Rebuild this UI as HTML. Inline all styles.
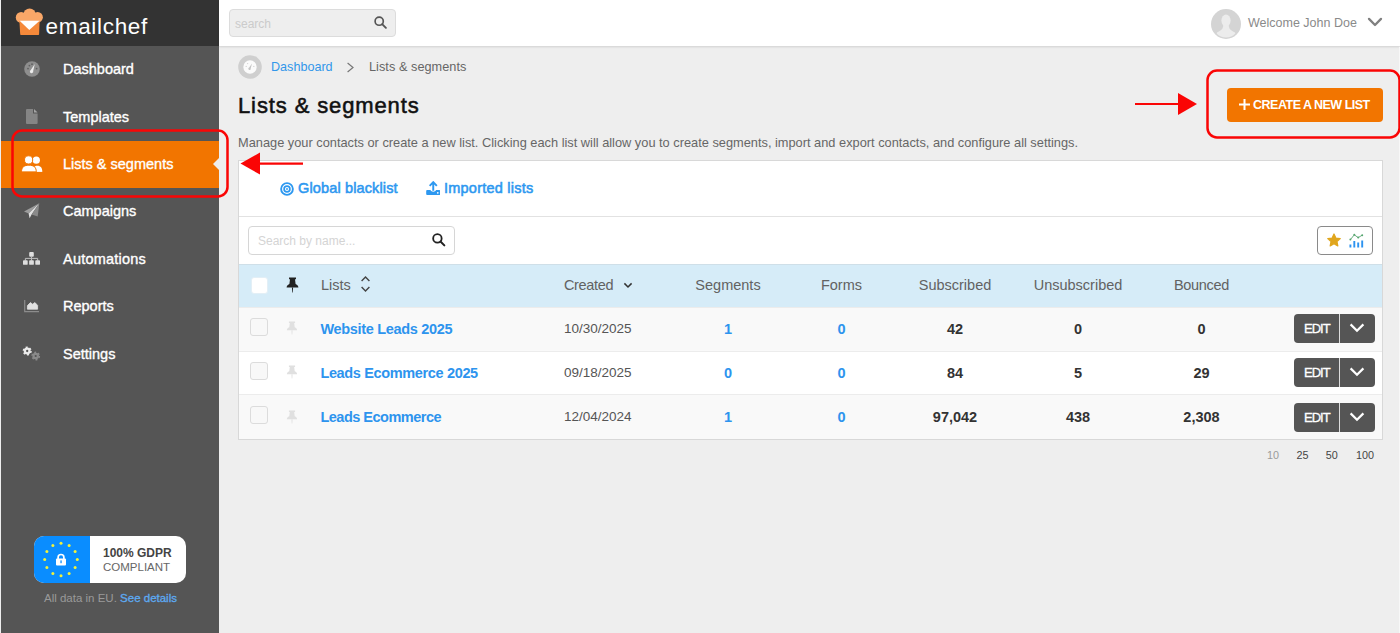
<!DOCTYPE html>
<html lang="en">
<head>
<meta charset="utf-8">
<title>Lists &amp; segments - emailchef</title>
<style>
*{box-sizing:border-box;margin:0;padding:0}
html,body{width:1400px;height:633px;overflow:hidden;background:#eeeeee;font-family:"Liberation Sans",sans-serif;}
body{position:relative}
.abs{position:absolute}
.t{position:absolute;white-space:nowrap;line-height:20px;height:20px}
/* sidebar */
#side{position:absolute;left:1px;top:0;width:218.4px;height:633px;background:#555555}
#logo{position:absolute;left:0;top:0;width:218.4px;height:46px;background:#333333}
#logo .t{left:44.5px;top:11.5px;font-size:22.5px;line-height:30px;height:30px;color:#fff;letter-spacing:.69px}
.nav{position:absolute;left:0;width:218.4px;height:47px}
.nav .t{left:62px;top:13px;font-size:14.5px;color:#fff;-webkit-text-stroke:0.35px #fff}
.nav.on{background:#f27500}
.nav.on:after{content:"";position:absolute;right:0;top:16.5px;border-style:solid;border-width:6.5px 6.5px 6.5px 0;border-color:transparent #eee transparent transparent}
.nav svg{position:absolute}
/* topbar */
#top{position:absolute;left:219.4px;top:0;width:1180.6px;height:46px;background:#fff;box-shadow:0 1px 2px rgba(0,0,0,.12)}
#gsearch{position:absolute;left:9.6px;top:9px;width:167px;height:28px;background:#eeeeee;border:1px solid #dcdcdc;border-radius:4px}
#gsearch .t{left:5px;top:4px;font-size:12px;color:#cbcbcb}
/* content */
a{color:#3297ea;text-decoration:none}
.med a{color:#2d98f0;-webkit-text-stroke:.55px #2d98f0}
#panel{position:absolute;left:238px;top:160px;width:1145px;height:280px;background:#fff;border:1px solid #d8d8d8}
.hr{position:absolute;left:0;width:1143px;height:1px;background:#e2e2e2}
#thead{position:absolute;left:0;top:103px;width:1143px;height:43px;background:#d6ecf8;border-top:1px solid #cfdfe8}
.row{position:absolute;left:0;width:1143px;height:44px;border-top:1px solid #ececec}
.row.odd{background:#f9f9f9}
.row .cb{background:#f8f8f8}
.cb{position:absolute;left:11px;width:18px;height:18px;border:1px solid #dcdcdc;border-radius:3px;background:#fff}
.th{font-size:14.5px;color:#626262;font-weight:normal}
.c{transform:translateX(-50%)}
.name{font-size:14.5px;font-weight:bold;color:#2d94ee;left:81.4px}
.date{font-size:13.5px;color:#555;left:325px}
.numb{font-size:14.5px;font-weight:bold;color:#2d94ee}
.numk{font-size:14.5px;font-weight:bold;color:#333}
.edit{position:absolute;left:1055px;width:81px;height:29px;background:#555;border-radius:4px}
.edit i{position:absolute;left:45px;top:0;width:1px;height:29px;background:#ddd}
.edit .t{left:10px;top:5px;font-size:13px;color:#fff;letter-spacing:-1px;-webkit-text-stroke:.3px #fff}
.edit svg{position:absolute;left:55px;top:9px}
.pg{font-size:10.8px;color:#444;top:445px}
</style>
</head>
<body>
<!-- SIDEBAR -->
<div id="side">
  <div id="logo">
    <svg class="abs" style="left:14px;top:7px" width="30" height="30" viewBox="0 0 30 30">
      <g fill="#f9a768"><circle cx="6.2" cy="10.4" r="5.4"/><circle cx="14.6" cy="7.6" r="6.2"/><circle cx="22.6" cy="10.2" r="5.3"/><rect x="5" y="8" width="19" height="8"/></g>
      <path d="M4.4 14.2 L24.6 14.2 L24.1 27.2 Q24.1 27.9 23.4 27.9 L5.9 27.9 Q5.2 27.9 5.2 27.2 Z" fill="#f5893a"/>
      <path d="M4.6 13.8 L24.6 13.8 L14.3 22.9 Z" fill="#ffffff"/>
    </svg>
    <span class="t">emailchef</span>
  </div>

  <div class="nav" style="top:46px">
    <svg style="left:23px;top:15px" width="16" height="16" viewBox="0 0 16 16"><circle cx="8" cy="8" r="7.8" fill="#8e8e8e"/><path d="M10.8 3 L9.2 10 A1.7 1.7 0 1 1 6.8 9 Z" fill="#ececec"/><circle cx="4" cy="7.6" r=".9" fill="#606060"/><circle cx="5.4" cy="4.6" r=".9" fill="#606060"/><circle cx="8" cy="3.2" r=".9" fill="#606060"/><circle cx="12.6" cy="7.6" r=".9" fill="#606060"/></svg>
    <span class="t">Dashboard</span>
  </div>
  <div class="nav" style="top:93px">
    <svg style="left:25px;top:16px" width="12" height="15" viewBox="0 0 12 15"><path d="M1 0 H7 V4.6 H11.6 V14 a1 1 0 0 1 -1 1 H1 a1 1 0 0 1 -1 -1 V1 a1 1 0 0 1 1 -1 Z" fill="#858585"/><path d="M8 0 L11.6 3.6 H8 Z" fill="#a5a5a5"/></svg>
    <span class="t" style="top:14px">Templates</span>
  </div>
  <div class="nav on" style="top:141px">
    <svg style="left:20px;top:14px" width="22" height="17" viewBox="0 0 22 17"><circle cx="15.3" cy="5.2" r="3.6" fill="#fff"/><path d="M12.8 16.9 C12.8 12.6 13.4 10.8 16.4 10.8 C19.8 10.8 21.3 13 21.3 16.9 Z" fill="#fff"/><circle cx="7.6" cy="4.9" r="4.1" fill="#fff" stroke="#f27500" stroke-width="1"/><path d="M0.5 16.9 C0.5 12.2 3 10.2 7.9 10.2 C12.8 10.2 15.3 12.2 15.3 16.9 Z" fill="#fff" stroke="#f27500" stroke-width="1"/><rect x="0" y="16.9" width="22" height="1" fill="#f27500"/></svg>
    <span class="t">Lists &amp; segments</span>
  </div>
  <div class="nav" style="top:188px">
    <svg style="left:23px;top:15px" width="16" height="16" viewBox="0 0 16 16"><path d="M15.3 .3 L0 8.6 L4.6 10.4 Z" fill="#9c9c9c"/><path d="M15.3 .3 L4.6 10.4 L5.6 15.2 L7.6 11.4 Z" fill="#e0e0e0"/><path d="M15.3 .3 L7.6 11.4 L13.7 13.6 Z" fill="#8a8a8a"/></svg>
    <span class="t">Campaigns</span>
  </div>
  <div class="nav" style="top:236px">
    <svg style="left:22.3px;top:15.9px" width="17" height="13" viewBox="0 0 17 13"><rect x="6.2" y="0" width="4.6" height="4.7" rx=".9" fill="#dedede"/><path d="M8.5 4.4 V8.6 M2.35 8.6 V6.4 H14.65 V8.6" stroke="#bdbdbd" stroke-width="1" fill="none"/><rect x="0" y="8.2" width="4.7" height="4.6" rx=".9" fill="#dedede"/><rect x="6.15" y="8.2" width="4.7" height="4.6" rx=".9" fill="#dedede"/><rect x="12.3" y="8.2" width="4.7" height="4.6" rx=".9" fill="#dedede"/></svg>
    <span class="t" style="letter-spacing:.22px">Automations</span>
  </div>
  <div class="nav" style="top:283px">
    <svg style="left:23.4px;top:16.6px" width="16" height="13" viewBox="0 0 16 13"><path d="M.7 0 V11.6 H15" stroke="#8c8c8c" stroke-width="1.2" fill="none"/><path d="M3.4 9.2 V5.6 L6.4 2.6 L8.6 4.2 L11 2.6 L13.6 5.4 V9.2 Z" fill="#e0e0e0" stroke="#e0e0e0" stroke-width=".8" stroke-linejoin="round"/></svg>
    <span class="t">Reports</span>
  </div>
  <div class="nav" style="top:331px">
    <svg style="left:20px;top:12px" width="20" height="20" viewBox="0 0 20 20"><g fill="none"><circle cx="6.2" cy="8" r="2.3" stroke="#ececec" stroke-width="2.3"/><circle cx="6.2" cy="8" r="3.8" stroke="#ececec" stroke-width="1.5" stroke-dasharray="1.99 1.99"/><circle cx="14.7" cy="13" r="2.2" stroke="#8a8a8a" stroke-width="2.2"/><circle cx="14.7" cy="13" r="3.7" stroke="#8a8a8a" stroke-width="1.4" stroke-dasharray="1.94 1.94"/></g></svg>
    <span class="t">Settings</span>
  </div>

  <!-- GDPR badge -->
  <div class="abs" style="left:33px;top:536px;width:152px;height:46.5px;background:#fff;border-radius:10px;overflow:hidden">
    <div class="abs" style="left:0;top:0;width:56px;height:47px;background:#0a8dff"></div>
    <svg class="abs" style="left:0;top:0" width="56" height="46" viewBox="0 0 56 46">
      <g fill="#f2f23a">
        <circle cx="27" cy="7.2" r="1.5"/><circle cx="35.1" cy="9.4" r="1.5"/><circle cx="41.1" cy="15.4" r="1.5"/><circle cx="43.3" cy="23.5" r="1.5"/><circle cx="41.1" cy="31.6" r="1.5"/><circle cx="35.1" cy="37.6" r="1.5"/><circle cx="27" cy="39.8" r="1.5"/><circle cx="18.9" cy="37.6" r="1.5"/><circle cx="12.9" cy="31.6" r="1.5"/><circle cx="10.7" cy="23.5" r="1.5"/><circle cx="12.9" cy="15.4" r="1.5"/><circle cx="18.9" cy="9.4" r="1.5"/>
      </g>
      <path d="M24.1 23 V21.4 a2.9 2.9 0 0 1 5.8 0 V23" stroke="#fff" stroke-width="1.7" fill="none"/>
      <rect x="22" y="22.4" width="10" height="7" rx="1" fill="#fff"/>
      <rect x="26.4" y="24.4" width="1.3" height="2.8" fill="#0a8dff"/>
    </svg>
    <span class="t" style="left:69px;top:7px;font-size:12px;font-weight:bold;color:#444">100% GDPR</span>
    <span class="t" style="left:69px;top:21px;font-size:11.5px;color:#666">COMPLIANT</span>
  </div>
  <span class="t" style="left:43px;top:588px;font-size:11.5px;color:#9a9a9a">All data in EU. <a style="color:#5daaf2;-webkit-text-stroke:0.3px #5daaf2">See details</a></span>
</div>

<!-- TOPBAR -->
<div id="top">
  <div id="gsearch">
    <span class="t">search</span>
    <svg class="abs" style="left:144px;top:6px" width="13" height="13" viewBox="0 0 14 14"><circle cx="5.6" cy="5.6" r="4.4" stroke="#555" stroke-width="1.8" fill="none"/><path d="M8.8 8.8 L12.8 12.8" stroke="#555" stroke-width="2" stroke-linecap="round"/></svg>
  </div>
  <svg class="abs" style="left:991.6px;top:9px" width="30" height="30" viewBox="0 0 30 30"><defs><clipPath id="av"><circle cx="15" cy="15" r="13.4"/></clipPath></defs><circle cx="15" cy="15" r="15" fill="#d4d4d4"/><g clip-path="url(#av)" fill="#ececec"><ellipse cx="15" cy="11.6" rx="4.6" ry="6"/><path d="M12.2 15 C12.6 20 10.4 21.4 6 23.4 L4 30 L26 30 L24 23.4 C19.6 21.4 17.4 20 17.8 15 Z"/></g></svg>
  <span class="t" style="left:1028.6px;top:13px;font-size:12.5px;color:#8a8a8a">Welcome John Doe</span>
  <svg class="abs" style="left:1147.6px;top:16.5px" width="16" height="11" viewBox="0 0 16 11"><path d="M2 1.9 L8 8 L14 1.9" stroke="#808080" stroke-width="2.3" fill="none" stroke-linecap="round" stroke-linejoin="round"/></svg>
</div>

<!-- BREADCRUMB -->
<svg class="abs" style="left:238px;top:55px" width="24" height="24" viewBox="0 0 24 24"><circle cx="12" cy="12" r="11.8" fill="#cfcfcf"/><circle cx="12" cy="12" r="6.7" fill="#fbfbfb"/><path d="M14 8.6 L12.7 13.4 A1.2 1.2 0 1 1 11.2 12.6 Z" fill="#c4c4c4"/><circle cx="8.2" cy="11.4" r=".7" fill="#d4d4d4"/><circle cx="9.6" cy="8.6" r=".7" fill="#d4d4d4"/><circle cx="15.8" cy="11.4" r=".7" fill="#d4d4d4"/></svg>
<span class="t" style="left:271px;top:57px;font-size:12.6px"><a>Dashboard</a></span>
<svg class="abs" style="left:346px;top:61.5px" width="9" height="11" viewBox="0 0 9 11"><path d="M1.6 1 L7 5.5 L1.6 10" stroke="#777" stroke-width="1.2" fill="none"/></svg>
<span class="t" style="left:369px;top:57px;font-size:12.7px;letter-spacing:.05px;color:#666">Lists &amp; segments</span>

<!-- HEADING -->
<h1 class="t" style="left:238px;top:90.5px;font-size:22px;letter-spacing:.88px;line-height:30px;height:30px;font-weight:normal;-webkit-text-stroke:.55px #111;color:#111">Lists &amp; segments</h1>
<span class="t" id="sub" style="left:238px;top:133px;font-size:12.8px;color:#666">Manage your contacts or create a new list. Clicking each list will allow you to create segments, import and export contacts, and configure all settings.</span>

<!-- CREATE BUTTON -->
<div class="abs" style="left:1227px;top:87.6px;width:156px;height:34.4px;background:#f27500;border-radius:4px">
  <svg class="abs" style="left:12px;top:11.5px" width="11" height="11" viewBox="0 0 11 11"><path d="M5.5 0 V11 M0 5.5 H11" stroke="#fff" stroke-width="2"/></svg>
  <span class="t" style="left:26px;top:7.4px;font-size:12.5px;letter-spacing:-.5px;font-weight:bold;color:#fff">CREATE A NEW LIST</span>
</div>

<!-- PANEL -->
<div id="panel">
  <svg class="abs" style="left:40.7px;top:20.6px" width="14" height="14" viewBox="0 0 15 15"><circle cx="7.5" cy="7.5" r="6.3" stroke="#2d98f0" stroke-width="2" fill="none"/><circle cx="7.5" cy="7.5" r="3.1" stroke="#2d98f0" stroke-width="1.8" fill="none"/><circle cx="7.5" cy="7.5" r="1" fill="#2d98f0"/></svg>
  <span class="t med" style="left:59px;top:17px;font-size:14.5px;letter-spacing:.14px"><a>Global blacklist</a></span>
  <svg class="abs" style="left:186.6px;top:20.3px" width="14.5" height="14.5" viewBox="0 0 15 15"><path d="M7.5 10 V1.6 M3.8 5 L7.5 1.2 L11.2 5" stroke="#2d98f0" stroke-width="2" fill="none"/><path d="M1.2 9.4 H4.6 C5.4 11.6 9.6 11.6 10.4 9.4 H13.8 a1 1 0 0 1 1 1 V13.4 a1 1 0 0 1 -1 1 H1.2 a1 1 0 0 1 -1 -1 V10.4 a1 1 0 0 1 1 -1 Z" fill="#2d98f0"/><circle cx="12.2" cy="12.2" r=".9" fill="#fff"/></svg>
  <span class="t med" style="left:205px;top:17px;font-size:14.5px;letter-spacing:.23px"><a>Imported lists</a></span>
  <div class="hr" style="top:55px"></div>

  <!-- search by name -->
  <div class="abs" style="left:9px;top:65px;width:207px;height:28.6px;border:1px solid #d6d6d6;border-radius:4px;background:#fff">
    <span class="t" style="left:9px;top:4px;font-size:12px;color:#d4d4d4">Search by name...</span>
    <svg class="abs" style="left:183px;top:6px" width="13.5" height="13.5" viewBox="0 0 14 14"><circle cx="5.6" cy="5.6" r="4.4" stroke="#222" stroke-width="1.9" fill="none"/><path d="M8.8 8.8 L12.8 12.8" stroke="#222" stroke-width="2.1" stroke-linecap="round"/></svg>
  </div>
  <!-- star / chart toggle -->
  <div class="abs" style="left:1078px;top:65px;width:56px;height:28.5px;border:1px solid #8a8a8a;border-radius:4px;background:#fff">
    <svg class="abs" style="left:8.6px;top:6.4px" width="14" height="14" viewBox="0 0 15 15"><path d="M7.5 1 L9.5 5.4 L14.2 6 L10.7 9.2 L11.6 13.9 L7.5 11.6 L3.4 13.9 L4.3 9.2 L.8 6 L5.5 5.4 Z" fill="#e0a61e" stroke="#e0a61e" stroke-width="1.3" stroke-linejoin="round"/></svg>
    <svg class="abs" style="left:31px;top:6px" width="15" height="15" viewBox="0 0 15 15"><path d="M1.4 6.6 L5.3 1.8 L9.2 4.6 L13.2 2.2" stroke="#6aae80" stroke-width="1" fill="none"/><g fill="#55a56e"><circle cx="1.4" cy="6.6" r="1"/><circle cx="5.3" cy="1.8" r="1"/><circle cx="9.2" cy="4.6" r="1"/><circle cx="13.2" cy="2.2" r="1"/></g><path d="M1.4 14.4 V11.6 M5.3 14.4 V8 M9.2 14.4 V9.6 M13.2 14.6 V7.6" stroke="#2d93f0" stroke-width="1.9"/></svg>
  </div>

  <!-- table header -->
  <div id="thead">
    <div class="cb" style="top:11.5px;left:12px;width:17px;height:17px;border-color:#e3eff6"></div>
    <svg class="abs" style="left:47.2px;top:11.5px" width="13" height="16" viewBox="0 0 13 16"><path d="M3 .6 H10 V2.2 H9 L9.6 7 C11.4 7.8 12.4 9 12.4 10.6 H.6 C.6 9 1.6 7.8 3.4 7 L4 2.2 H3 Z" fill="#222"/><path d="M5.9 10.6 H7.1 L6.8 15.4 H6.2 Z" fill="#222"/></svg>
    <span class="t th" style="left:82px;top:10px">Lists</span>
    <svg class="abs" style="left:121px;top:10px" width="11" height="18" viewBox="0 0 11 18"><path d="M1.6 6 L5.5 2 L9.4 6 M1.6 12 L5.5 16 L9.4 12" stroke="#444" stroke-width="1.4" fill="none"/></svg>
    <span class="t th" style="left:325px;top:10px;letter-spacing:-.35px">Created</span>
    <svg class="abs" style="left:384px;top:17px" width="10" height="7" viewBox="0 0 10 7"><path d="M1.4 1.4 L5 5 L8.6 1.4" stroke="#333" stroke-width="1.5" fill="none"/></svg>
    <span class="t th c" style="left:489px;top:10px">Segments</span>
    <span class="t th c" style="left:602.5px;top:10px">Forms</span>
    <span class="t th c" style="left:716px;top:10px">Subscribed</span>
    <span class="t th c" style="left:839px;top:10px">Unsubscribed</span>
    <span class="t th c" style="left:962.5px;top:10px;letter-spacing:-.3px">Bounced</span>
  </div>

  <!-- rows -->
  <div class="row odd" style="top:146px">
    <div class="cb" style="top:9.5px"></div>
    <svg class="abs pin" style="left:47.2px;top:13px" width="12" height="14" viewBox="0 0 13 16"><path d="M3 .6 H10 V2.2 H9 L9.6 7 C11.4 7.8 12.4 9 12.4 10.6 H.6 C.6 9 1.6 7.8 3.4 7 L4 2.2 H3 Z" fill="#e0e0e0"/><path d="M5.9 10.6 H7.1 L6.8 15.4 H6.2 Z" fill="#e0e0e0"/></svg>
    <span class="t name" style="top:11px;letter-spacing:-.31px">Website Leads 2025</span>
    <span class="t date" style="top:11px">10/30/2025</span>
    <span class="t numb c" style="left:489px;top:11px">1</span>
    <span class="t numb c" style="left:602.5px;top:11px">0</span>
    <span class="t numk c" style="left:716px;top:11px">42</span>
    <span class="t numk c" style="left:839px;top:11px">0</span>
    <span class="t numk c" style="left:962.5px;top:11px">0</span>
    <div class="edit" style="top:6px"><span class="t">EDIT</span><i></i><svg width="16" height="10" viewBox="0 0 16 10"><path d="M1.6 1.4 L8 7.8 L14.4 1.4" stroke="#fff" stroke-width="2.2" fill="none"/></svg></div>
  </div>
  <div class="row" style="top:190px">
    <div class="cb" style="top:9.5px"></div>
    <svg class="abs pin" style="left:47.2px;top:13px" width="12" height="14" viewBox="0 0 13 16"><path d="M3 .6 H10 V2.2 H9 L9.6 7 C11.4 7.8 12.4 9 12.4 10.6 H.6 C.6 9 1.6 7.8 3.4 7 L4 2.2 H3 Z" fill="#e0e0e0"/><path d="M5.9 10.6 H7.1 L6.8 15.4 H6.2 Z" fill="#e0e0e0"/></svg>
    <span class="t name" style="top:11px;letter-spacing:-.35px">Leads Ecommerce 2025</span>
    <span class="t date" style="top:11px">09/18/2025</span>
    <span class="t numb c" style="left:489px;top:11px">0</span>
    <span class="t numb c" style="left:602.5px;top:11px">0</span>
    <span class="t numk c" style="left:716px;top:11px">84</span>
    <span class="t numk c" style="left:839px;top:11px">5</span>
    <span class="t numk c" style="left:962.5px;top:11px">29</span>
    <div class="edit" style="top:6px"><span class="t">EDIT</span><i></i><svg width="16" height="10" viewBox="0 0 16 10"><path d="M1.6 1.4 L8 7.8 L14.4 1.4" stroke="#fff" stroke-width="2.2" fill="none"/></svg></div>
  </div>
  <div class="row odd" style="top:233px;height:45px">
    <div class="cb" style="top:10.5px"></div>
    <svg class="abs pin" style="left:47.2px;top:15px" width="12" height="14" viewBox="0 0 13 16"><path d="M3 .6 H10 V2.2 H9 L9.6 7 C11.4 7.8 12.4 9 12.4 10.6 H.6 C.6 9 1.6 7.8 3.4 7 L4 2.2 H3 Z" fill="#e0e0e0"/><path d="M5.9 10.6 H7.1 L6.8 15.4 H6.2 Z" fill="#e0e0e0"/></svg>
    <span class="t name" style="top:12px;letter-spacing:-.5px">Leads Ecommerce</span>
    <span class="t date" style="top:12px">12/04/2024</span>
    <span class="t numb c" style="left:489px;top:12px">1</span>
    <span class="t numb c" style="left:602.5px;top:12px">0</span>
    <span class="t numk c" style="left:716px;top:12px">97,042</span>
    <span class="t numk c" style="left:839px;top:12px">438</span>
    <span class="t numk c" style="left:962.5px;top:12px">2,308</span>
    <div class="edit" style="top:7.5px"><span class="t">EDIT</span><i></i><svg width="16" height="10" viewBox="0 0 16 10"><path d="M1.6 1.4 L8 7.8 L14.4 1.4" stroke="#fff" stroke-width="2.2" fill="none"/></svg></div>
  </div>
</div>

<!-- page sizes -->
<span class="t pg" style="left:1267px;color:#9a9a9a">10</span>
<span class="t pg" style="left:1296.4px">25</span>
<span class="t pg" style="left:1325.8px">50</span>
<span class="t pg" style="left:1356px">100</span>

<div class="abs" style="left:1399px;top:47px;width:1px;height:586px;background:#f7f7f7"></div>
<!-- ANNOTATIONS (red) -->
<svg class="abs" style="left:0;top:0;pointer-events:none" width="1400" height="633" viewBox="0 0 1400 633">
  <rect x="12.5" y="130.5" width="215" height="66" rx="9.5" ry="9.5" fill="none" stroke="#fa0505" stroke-width="2.5"/>
  <rect x="1207.5" y="70.5" width="192" height="67" rx="9.5" ry="9.5" fill="none" stroke="#fa0505" stroke-width="2.5"/>
  <path d="M258 163.6 H303" stroke="#fa0505" stroke-width="2.2"/>
  <path d="M240.5 163.6 L260 152.6 V174.6 Z" fill="#fa0505"/>
  <path d="M1135 104 H1180" stroke="#fa0505" stroke-width="2.2"/>
  <path d="M1197 104 L1178 93 V115 Z" fill="#fa0505"/>
</svg>
</body>
</html>
